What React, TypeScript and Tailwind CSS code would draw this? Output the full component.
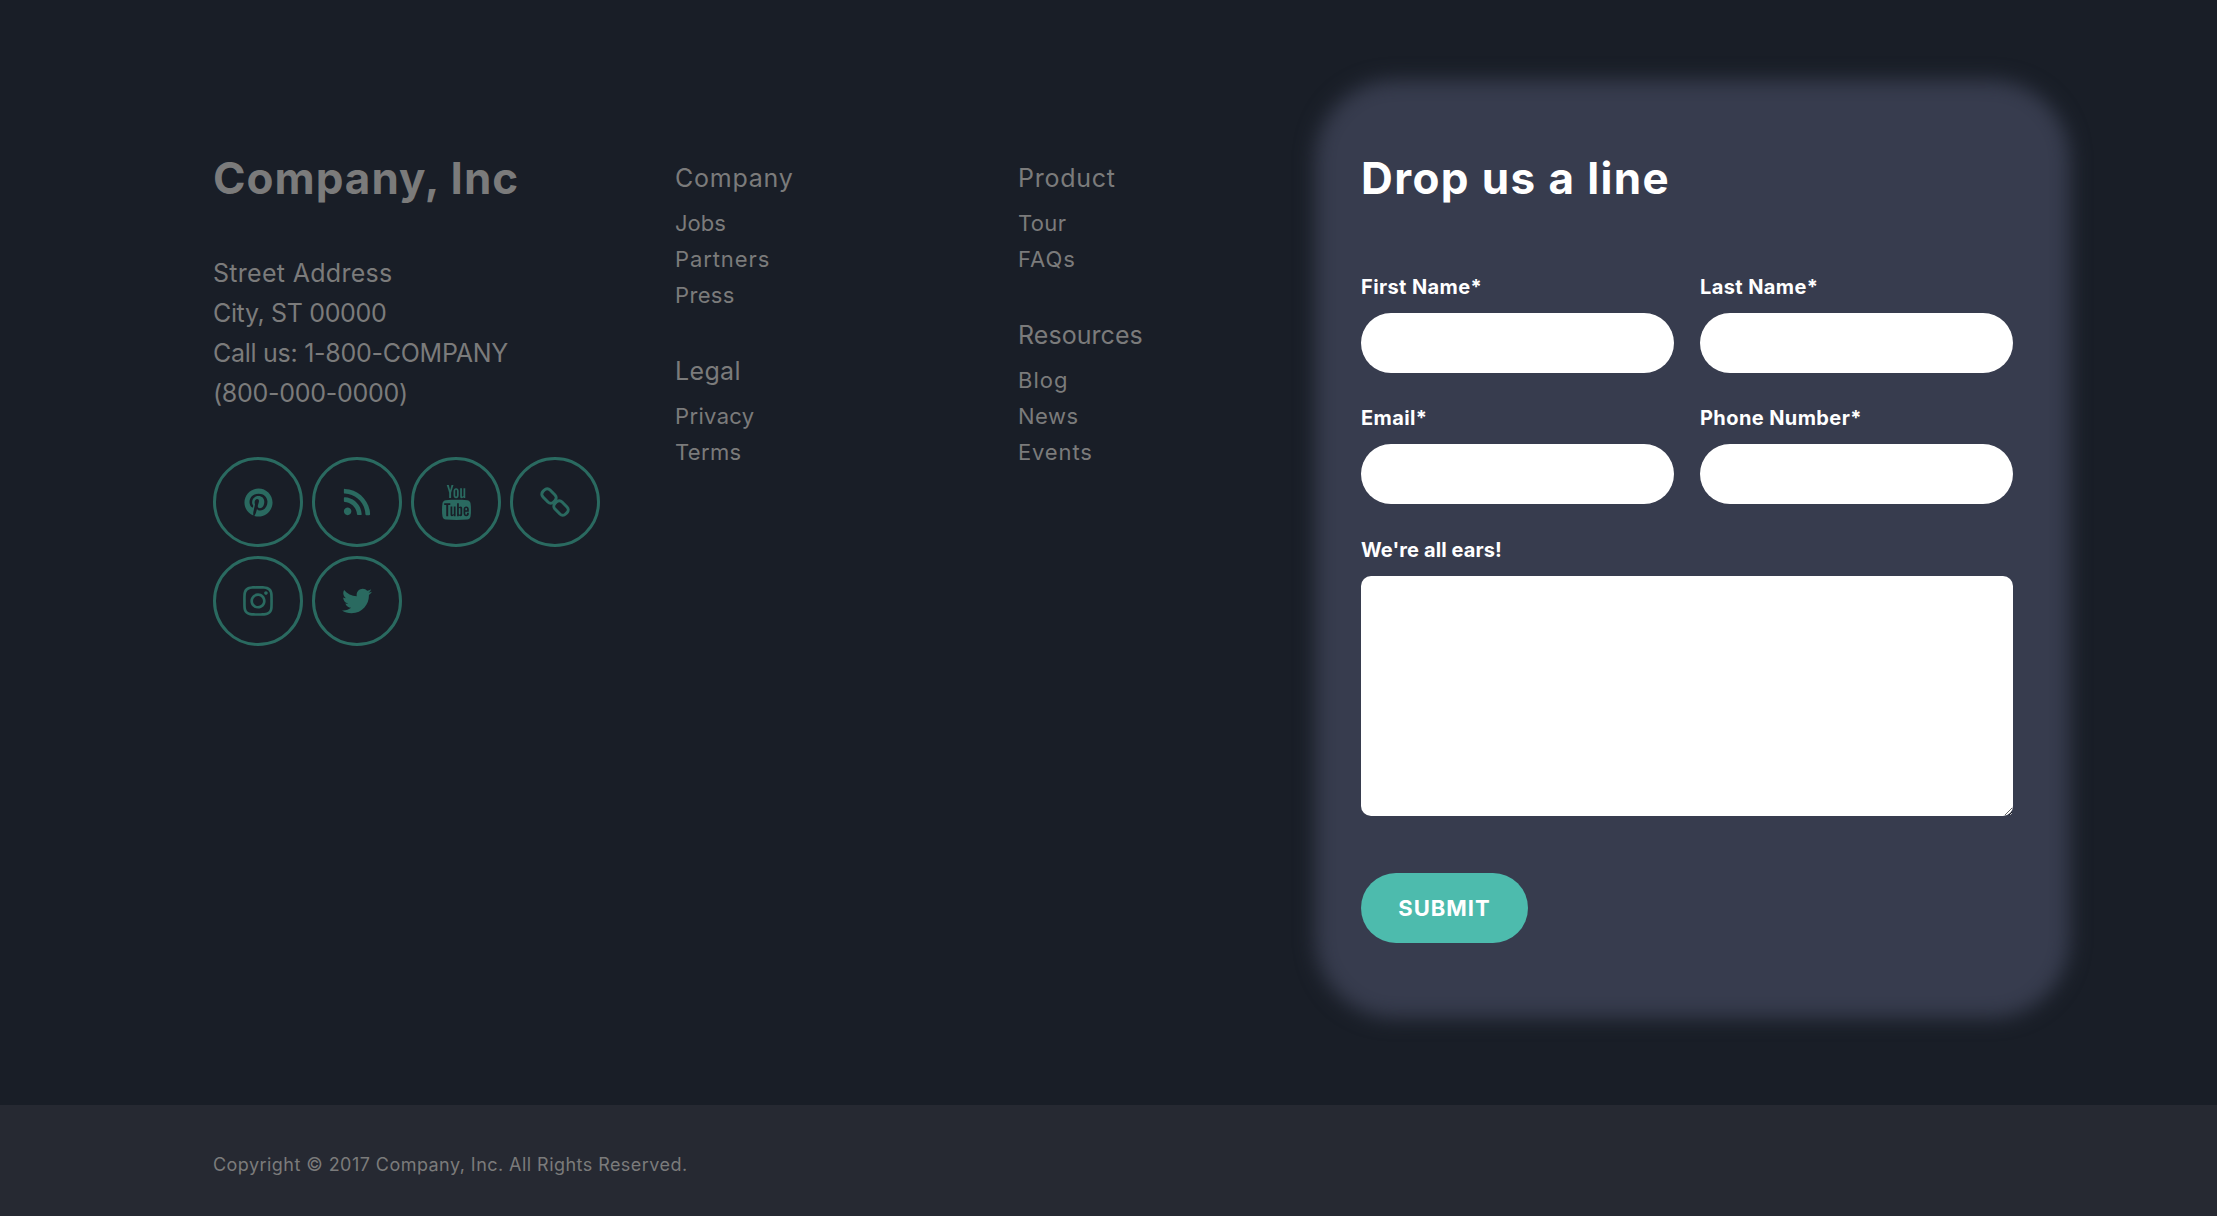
import { FaPinterest, FaRss, FaInstagram, FaTwitter } from "react-icons/fa";
import { TfiYoutube } from "react-icons/tfi";
import type { ReactNode } from "react";

function LinkIcon() {
  return (
    <svg width="34" height="34" viewBox="0 0 34 34" fill="none" stroke="currentColor" strokeWidth="3">
      <rect x="3.5" y="6" width="15" height="10" rx="4" transform="rotate(45 11 11)" />
      <rect x="15.5" y="18" width="15" height="10" rx="4" transform="rotate(45 23 23)" />
    </svg>
  );
}

function Social({ children }: { children: ReactNode }) {
  return (
    <a className="flex h-[90px] w-[90px] items-center justify-center rounded-full border-[3px] border-[#2a6a60] text-[#2a6a60]">
      {children}
    </a>
  );
}

type Item = { text: string; track: string };

function NavGroup({ title, track, links, className = "" }: { title: string; track: string; links: Item[]; className?: string }) {
  return (
    <div className={className}>
      <h3 className={`text-[25px] leading-[40px] font-normal ${track}`}>{title}</h3>
      <ul className="mt-[7px]">
        {links.map((l) => (
          <li key={l.text} className={`text-[22px] leading-[36px] ${l.track}`}>{l.text}</li>
        ))}
      </ul>
    </div>
  );
}

function Field({ label }: { label: string }) {
  return (
    <label className="block">
      <span className="block text-[20px] leading-[30px] font-bold text-white tracking-[0.4px]">{label}</span>
      <input className="mt-[11px] block h-[60px] w-full rounded-full bg-white" />
    </label>
  );
}

export default function App() {
  return (
    <div className="min-h-screen bg-[#191e27] font-['Inter',sans-serif] text-[#7b7b7b]">
      <main className="flex h-[1105px] pl-[213px] pt-[148px] overflow-hidden">
        <section className="w-[462px]">
          <h2 className="text-[44px] leading-[60px] font-bold tracking-[1px]">Company, Inc</h2>
          <address className="mt-[45px] text-[25px] leading-[40px] not-italic">
            <div className="tracking-[0.3px]">Street Address</div>
            <div className="tracking-[-0.35px]">City, ST 00000</div>
            <div className="tracking-[-0.27px]">Call us: 1-800-COMPANY</div>
            <div className="tracking-[-0.28px]">(800-000-0000)</div>
          </address>
          <div className="mt-[44px] flex w-[400px] flex-wrap gap-[9px]">
            <Social><FaPinterest size={29} /></Social>
            <Social><FaRss size={30} /></Social>
            <Social><TfiYoutube size={35} /></Social>
            <Social><LinkIcon /></Social>
            <Social><FaInstagram size={34} /></Social>
            <Social><FaTwitter size={30} /></Social>
          </div>
        </section>
        <nav className="w-[343px] pt-[10px]">
          <NavGroup
            title="Company"
            track="tracking-[0.75px]"
            links={[
              { text: "Jobs", track: "tracking-[0px]" },
              { text: "Partners", track: "tracking-[0.9px]" },
              { text: "Press", track: "tracking-[0.35px]" },
            ]}
          />
          <NavGroup
            title="Legal"
            track="tracking-[0.35px]"
            className="mt-[38px]"
            links={[
              { text: "Privacy", track: "tracking-[0.35px]" },
              { text: "Terms", track: "tracking-[0.35px]" },
            ]}
          />
        </nav>
        <nav className="w-[343px] pt-[10px]">
          <NavGroup
            title="Product"
            track="tracking-[0.75px]"
            links={[
              { text: "Tour", track: "tracking-[0.35px]" },
              { text: "FAQs", track: "tracking-[1px]" },
            ]}
          />
          <NavGroup
            title="Resources"
            track="tracking-[0.05px]"
            className="mt-[38px]"
            links={[
              { text: "Blog", track: "tracking-[1px]" },
              { text: "News", track: "tracking-[0.5px]" },
              { text: "Events", track: "tracking-[0.85px]" },
            ]}
          />
        </nav>
        <div className="relative h-[795px] w-[652px]">
          <div className="absolute -top-[68px] -bottom-[75px] -left-[46px] -right-[57px] rounded-[80px] bg-[#373c4e] blur-[10px]" />
          <form className="relative">
            <h2 className="text-[44px] leading-[60px] font-bold tracking-[1.4px] text-white">Drop us a line</h2>
            <div className="mt-[64px] grid grid-cols-2 gap-x-[26px] gap-y-[30px]">
              <Field label="First Name*" />
              <Field label="Last Name*" />
              <Field label="Email*" />
              <Field label="Phone Number*" />
            </div>
            <label className="mt-[31px] block">
              <span className="block text-[20px] leading-[30px] font-bold text-white tracking-[0.1px]">We're all ears!</span>
              <textarea className="mt-[11px] block h-[240px] w-full rounded-[10px] bg-white" />
            </label>
            <button type="button" className="mt-[57px] block h-[70px] w-[167px] rounded-full bg-[#4dbbad] text-[22px] font-bold tracking-[1px] text-white">
              SUBMIT
            </button>
          </form>
        </div>
      </main>
      <footer className="flex h-[111px] items-center bg-[#262932] pl-[213px] pt-[8px] text-[18px] tracking-[0.45px]">
        Copyright © 2017 Company, Inc. All Rights Reserved.
      </footer>
    </div>
  );
}
